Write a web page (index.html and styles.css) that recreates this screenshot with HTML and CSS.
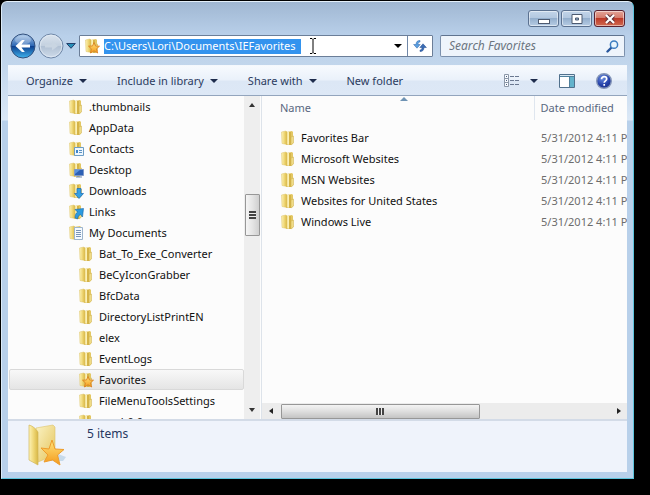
FILE: index.html
```html
<!DOCTYPE html>
<html lang="en">
<head>
<meta charset="utf-8">
<title>IEFavorites</title>
<link rel="stylesheet" href="styles.css">
</head>
<body>
<svg class="defs" aria-hidden="true">
  <defs>
    <linearGradient id="gold" x1="0" x2="1" y1="0" y2="0">
      <stop offset="0" stop-color="#fdf3b8"/><stop offset=".5" stop-color="#f0d878"/><stop offset="1" stop-color="#d9b845"/>
    </linearGradient>
    <linearGradient id="goldv" x1="0" x2="1" y1="0" y2="1">
      <stop offset="0" stop-color="#fbf3c4"/><stop offset="1" stop-color="#e4c45c"/>
    </linearGradient>
    <linearGradient id="star" x1="0" x2="0" y1="0" y2="1">
      <stop offset="0" stop-color="#ffe47a"/><stop offset="1" stop-color="#f49a1c"/>
    </linearGradient>
    <linearGradient id="back" x1="0" x2="0" y1="0" y2="1">
      <stop offset="0" stop-color="#a9c8ea"/><stop offset=".48" stop-color="#2f68b4"/><stop offset=".5" stop-color="#0c3c8c"/><stop offset="1" stop-color="#3fb4ee"/>
    </linearGradient>
    <linearGradient id="fwd" x1="0" x2="0" y1="0" y2="1">
      <stop offset="0" stop-color="#dbe4ee"/><stop offset=".48" stop-color="#c3d0df"/><stop offset=".52" stop-color="#b1c1d4"/><stop offset="1" stop-color="#cfdcea"/>
    </linearGradient>
    <radialGradient id="help" cx=".4" cy=".3" r=".8">
      <stop offset="0" stop-color="#6c8fe0"/><stop offset=".6" stop-color="#2440a8"/><stop offset="1" stop-color="#1c2f80"/>
    </radialGradient>
    <symbol id="folder" viewBox="0 0 16 16">
      <path d="M6 2 12 1l1 1v12l-7 1z" fill="#e3c763"/>
      <path d="M7 2h2v12H7z" fill="#fbf0b4"/>
      <path d="M9 2h2v13H9z" fill="#d5b447"/>
      <path d="M11 7 13.500 6v7L11 15z" fill="#f0dc86" stroke="#cdae4c" stroke-width=".5"/>
      <path d="M1.500 2 6 1l1 1v12.500L2 13.500z" fill="url(#gold)" stroke="#dcc266" stroke-width=".5"/>
    </symbol>
    <symbol id="contacts" viewBox="0 0 16 16">
      <use href="#folder"/><path d="M6.500 6.500h9v8h-9z" fill="#eef7fe" stroke="#6c9cc4"/><path d="M8 9h2v3H8z" fill="#3d86cc"/><path d="M11 9.500h3M11 11.500h3" stroke="#5d92c4"/>
    </symbol>
    <symbol id="desktop" viewBox="0 0 16 16">
      <use href="#folder"/><path d="M6.500 7.500h9v6h-9z" fill="#2c5fb4" stroke="#7d98c8"/><path d="m7 8h5l-5 4z" fill="#5b93dc"/><path d="M8 15h6" stroke="#718bb8"/>
    </symbol>
    <symbol id="downloads" viewBox="0 0 16 16">
      <use href="#folder"/><path d="M9 5.500h4v5h2.500L11 15.500 6.500 10.500H9z" fill="#35a0e4" stroke="#1769b4" stroke-width=".7"/>
    </symbol>
    <symbol id="links" viewBox="0 0 16 16">
      <use href="#folder"/><path d="M7 5.500l8.500-1-1 8.500-2-2.500c-2 1-2.500 2-3 4.500l-2.500-1c0-3 1-5 2.500-6z" fill="#2c9ae0" stroke="#1464a8" stroke-width=".6"/>
    </symbol>
    <symbol id="documents" viewBox="0 0 16 16">
      <use href="#folder"/><path d="M6.500 2.500h8v12h-8z" fill="#f5faff" stroke="#9db4cc"/><path d="M8 5.500h5M8 7.500h5M8 9.500h5M8 11.500h5" stroke="#7894b8"/>
    </symbol>
    <symbol id="favorites" viewBox="0 0 16 16">
      <use href="#folder"/><path d="m10 4.500 1.500 3.500 4 .2-3 2.600 1.200 4.200-3.700-2.200L6.500 15l.9-4.200-2.900-2.600 4-.2z" fill="url(#star)" stroke="#d87818" stroke-width=".8"/>
    </symbol>
  </defs>
</svg>

<main class="window">
  <header class="titlebar">
    <button class="caption" aria-label="Minimize"><svg width="12" height="12" viewBox="0 0 12 12"><rect x=".5" y="6.500" width="11" height="4" fill="#fff" stroke="#4d5a70"/></svg></button>
    <button class="caption" aria-label="Maximize"><svg width="12" height="12" viewBox="0 0 12 12"><path d="M1 1.500h10v9H1zM4.500 5h3v2h-3z" fill="#fff" fill-rule="evenodd" stroke="#4d5a70"/></svg></button>
    <button class="caption close" aria-label="Close"><svg width="12" height="12" viewBox="0 0 12 12"><path d="m2.500 2.500 7 7m0-7-7 7" stroke="#5c3038" stroke-width="4"/><path d="m2 2 8 8m0-8-8 8" stroke="#fff" stroke-width="2.200"/></svg></button>
  </header>

  <nav class="address-row" aria-label="Location">
    <div class="travel">
      <button class="plain" aria-label="Back"><svg width="26" height="26" viewBox="0 0 26 26"><circle cx="13" cy="13" r="12" fill="url(#back)" stroke="#33507c"/><ellipse cx="13" cy="7" rx="8" ry="4.500" fill="#fff" opacity=".25"/><path d="M5.500 13 12 7h2.800L11.500 11.500H20v3h-8.500l3.300 4.500H12z" fill="#fff"/></svg></button>
      <button class="plain" aria-label="Forward"><svg width="26" height="26" viewBox="0 0 26 26"><circle cx="13" cy="13" r="12" fill="url(#fwd)" stroke="#7088a8"/><circle cx="13" cy="13" r="10.800" fill="none" stroke="#e4edf7" opacity=".7"/><path d="M20 13 14 8.500v3H7v3h7v3z" fill="#c9d5e2"/></svg></button>
      <button class="plain recent" aria-label="Recent pages"><svg width="10" height="6" viewBox="0 0 10 6"><path d="M.7.500h8.600L5 5.300z" fill="#278fb8" stroke="#25406c"/></svg></button>
    </div>
    <div class="address">
      <svg class="ico" viewBox="0 0 16 16"><use href="#favorites"/></svg>
      <input class="path" id="path" aria-label="Address" value="C:\Users\Lori\Documents\IEFavorites">
      <svg class="ibeam" width="8" height="16" viewBox="0 0 8 16"><path d="M1 .5h2l1 1 1-1h2M4 1.500v13M1 15.500h2l1-1 1 1h2" fill="none" stroke="#000"/></svg>
      <button class="plain drop" aria-label="Previous locations"><i class="caret black"></i></button>
      <button class="plain refresh" aria-label="Refresh"><svg width="14" height="14" viewBox="0 0 14 14"><path d="M7 1.500C4.600 1.300 3 2.800 3 5.500H.6L4 9.200 7.200 5.500H5C5 4 5.600 3 7 3z" fill="#5a9fe0" stroke="#2f64a8" stroke-width=".5"/><path d="M7 12.500c2.400.2 4-1.300 4-4h2.400L10 4.800 6.800 8.500H9c0 1.500-.6 2.500-2 2.500z" fill="#3a6cb4" stroke="#234d90" stroke-width=".5"/></svg></button>
    </div>
    <div class="search">
      <input type="search" class="query" aria-label="Search Favorites" placeholder="Search Favorites">
      <svg width="13" height="13" viewBox="0 0 13 13"><path d="m1.500 11.500 4-4" stroke="#28569c" stroke-width="2.400" stroke-linecap="round"/><circle cx="8" cy="4.700" r="3.600" fill="#e8f5fd" stroke="#3b7cc0" stroke-width="1.500"/></svg>
    </div>
  </nav>

  <div class="client">
    <div class="toolbar">
      <button class="plain cmd">Organize<i class="caret"></i></button>
      <button class="plain cmd">Include in library<i class="caret"></i></button>
      <button class="plain cmd">Share with<i class="caret"></i></button>
      <button class="plain cmd">New folder</button>
      <div class="tools">
        <button class="plain views" aria-label="Change view"><svg width="16" height="13" viewBox="0 0 16 13"><path d="M.5.500h4v12h-4zM.5 4.500h4M.5 8.500h4" fill="#f8fbff" stroke="#8c98a8"/><path d="M2 2.500h1M2 6.500h1M2 10.500h1" stroke="#4b5f7c"/><path d="M6 2.500h4M11 2.500h4M6 6.500h4M11 6.500h4M6 10.500h4M11 10.500h4" stroke="#6a7890"/></svg><i class="caret"></i></button>
        <button class="plain" aria-label="Preview pane"><svg width="16" height="14" viewBox="0 0 16 14"><path d="M.5.500h15v13H.5z" fill="#fff" stroke="#50708c"/><path d="M1 1h14v2H1z" fill="#d8e8f4"/><path d="M10 3h5v10h-5z" fill="#63b3cc"/><path d="M10.500 3v10M1 2.500h14" stroke="#50809c"/></svg></button>
        <button class="plain" aria-label="Get help"><svg width="16" height="16" viewBox="0 0 16 16"><circle cx="8" cy="8" r="7.300" fill="url(#help)" stroke="#8495b8" stroke-width="1.400"/><path d="M5.500 6.200C5.500 2.800 10.700 3 10.700 6c0 1.900-2.500 1.900-2.500 3.800M8.200 11v1.800" fill="none" stroke="#fff" stroke-width="1.700"/></svg></button>
      </div>
    </div>

    <div class="panes">
      <div class="tree-pane">
        <ul class="tree">
          <li><svg class="ico" viewBox="0 0 16 16"><use href="#folder"/></svg>.thumbnails</li>
          <li><svg class="ico" viewBox="0 0 16 16"><use href="#folder"/></svg>AppData</li>
          <li><svg class="ico" viewBox="0 0 16 16"><use href="#contacts"/></svg>Contacts</li>
          <li><svg class="ico" viewBox="0 0 16 16"><use href="#desktop"/></svg>Desktop</li>
          <li><svg class="ico" viewBox="0 0 16 16"><use href="#downloads"/></svg>Downloads</li>
          <li><svg class="ico" viewBox="0 0 16 16"><use href="#links"/></svg>Links</li>
          <li><svg class="ico" viewBox="0 0 16 16"><use href="#documents"/></svg>My Documents</li>
          <li class="sub"><svg class="ico" viewBox="0 0 16 16"><use href="#folder"/></svg>Bat_To_Exe_Converter</li>
          <li class="sub"><svg class="ico" viewBox="0 0 16 16"><use href="#folder"/></svg>BeCyIconGrabber</li>
          <li class="sub"><svg class="ico" viewBox="0 0 16 16"><use href="#folder"/></svg>BfcData</li>
          <li class="sub"><svg class="ico" viewBox="0 0 16 16"><use href="#folder"/></svg>DirectoryListPrintEN</li>
          <li class="sub"><svg class="ico" viewBox="0 0 16 16"><use href="#folder"/></svg>elex</li>
          <li class="sub"><svg class="ico" viewBox="0 0 16 16"><use href="#folder"/></svg>EventLogs</li>
          <li class="sub current"><svg class="ico" viewBox="0 0 16 16"><use href="#favorites"/></svg>Favorites</li>
          <li class="sub"><svg class="ico" viewBox="0 0 16 16"><use href="#folder"/></svg>FileMenuToolsSettings</li>
          <li class="sub"><svg class="ico" viewBox="0 0 16 16"><use href="#folder"/></svg>mcab0.0</li>
        </ul>
      </div>
      <div class="vscroll">
        <i class="arrow up"></i>
        <span class="space-a"></span>
        <span class="thumb"><i class="grip"></i></span>
        <span class="space-b"></span>
        <i class="arrow down"></i>
      </div>
      <section class="files">
        <div class="list">
          <table>
            <thead><tr><th class="name">Name<svg class="sort" width="8" height="4" viewBox="0 0 8 4"><path d="M4 0 8 4H0z" fill="#6f93b4"/></svg></th><th class="date">Date modified</th></tr></thead>
            <tbody>
              <tr><td><span class="file"><svg class="ico" viewBox="0 0 16 16"><use href="#folder"/></svg>Favorites Bar</span></td><td class="date">5/31/2012 4:11 PM</td></tr>
              <tr><td><span class="file"><svg class="ico" viewBox="0 0 16 16"><use href="#folder"/></svg>Microsoft Websites</span></td><td class="date">5/31/2012 4:11 PM</td></tr>
              <tr><td><span class="file"><svg class="ico" viewBox="0 0 16 16"><use href="#folder"/></svg>MSN Websites</span></td><td class="date">5/31/2012 4:11 PM</td></tr>
              <tr><td><span class="file"><svg class="ico" viewBox="0 0 16 16"><use href="#folder"/></svg>Websites for United States</span></td><td class="date">5/31/2012 4:11 PM</td></tr>
              <tr><td><span class="file"><svg class="ico" viewBox="0 0 16 16"><use href="#folder"/></svg>Windows Live</span></td><td class="date">5/31/2012 4:11 PM</td></tr>
            </tbody>
          </table>
        </div>
        <div class="hscroll">
          <i class="arrow left"></i>
          <span class="thumb"><i class="grip"></i></span>
          <span class="space"></span>
          <i class="arrow right"></i>
        </div>
      </section>
    </div>

    <footer class="details">
      <svg width="40" height="44" viewBox="0 0 40 44">
        <path d="M16 37h20l3-4-8-3z" fill="#8db4d4" opacity=".4"/>
        <path d="M9 4 26 1l2 2v28L11 38z" fill="url(#goldv)" stroke="#dcc36a" stroke-width=".6"/>
        <path d="M2 1c4 1 7 4 9 7v33l-9-5z" fill="url(#gold)" stroke="#d2b85c" stroke-width=".7"/>
        <path d="m25 16 3 9 9 .5-6.500 5.500 2.500 10-7.500-5L17 38l4-7-7-7 8 1z" fill="url(#star)" stroke="#ee9c2c" stroke-linejoin="round"/>
      </svg>
      <span>5 items</span>
    </footer>
  </div>
</main>
</body>
</html>
```
FILE: styles.css
```css
* { box-sizing: border-box; }

body {
  margin: 0;
  min-height: 100vh;
  padding: 1px 16px 16px 1px;
  display: flex;
  background: #000;
  font: 11px/20px "Noto Sans", "Open Sans", sans-serif;
  color: #111;
}

.defs { position: absolute; width: 0; height: 0; }
svg { display: block; flex: none; }

.plain {
  display: flex;
  align-items: center;
  padding: 0;
  border: 0;
  background: none;
  font: inherit;
  color: inherit;
}

.window {
  flex: 1;
  min-width: 0;
  display: flex;
  flex-direction: column;
  padding: 0 6px 6px;
  border: 1px solid #5cc4dc;
  border-top-color: #e4f0fa;
  border-left-color: #dcebf8;
  border-radius: 6px 6px 0 0;
  background: linear-gradient(#a0b7d2 0, #b9d0ea 34px, #c2d6ec 64px, #dbe8f6 118px, #b8d0ea 119px, #b8d0ea 100%);
}

.titlebar {
  display: flex;
  justify-content: flex-end;
  gap: 2px;
  height: 33px;
  padding: 8px 2px 0 0;
}
.caption {
  display: grid;
  place-items: center;
  width: 31px;
  height: 17px;
  padding: 0;
  border: 1px solid #5b7190;
  border-radius: 3px;
  background: linear-gradient(#c3d5e9 0, #b3c8e0 45%, #94afcd 50%, #b6cce4 100%);
  box-shadow: inset 0 0 0 1px rgba(255, 255, 255, .5);
}
.close {
  border-color: #5a2230;
  background: linear-gradient(#e4a497 0, #d57c6c 45%, #bd3a28 50%, #d06a50 100%);
}

.address-row {
  display: flex;
  align-items: center;
  gap: 7px;
  height: 22px;
  margin-bottom: 8px;
  padding: 0 2px;
}
.travel { display: flex; align-items: center; gap: 2px; width: 62px; }
.address {
  flex: 2 1 354px;
  min-width: 0;
  display: flex;
  align-items: center;
  height: 22px;
  padding-left: 4px;
  border: 1px solid #6b7e98;
  border-radius: 1px;
  background: #fff;
}
.path {
  width: 197px;
  height: 15px;
  margin-left: 4px;
  padding: 0;
  border: 0;
  outline: 0;
  background: #3393ee;
  font: inherit;
  color: #fff;
}
.ibeam { margin-left: 8px; }
.drop { margin-left: auto; padding: 0 5px; }
.refresh {
  justify-content: center;
  width: 25px;
  height: 20px;
  border-left: 1px solid #7088a8;
}
.search {
  flex: 1 1 185px;
  min-width: 0;
  display: flex;
  align-items: center;
  height: 22px;
  padding: 0 5px 0 8px;
  border: 1px solid #7b90ac;
  border-top-color: #5f738f;
  border-radius: 2px;
  background: #eef4fb;
}
.query {
  flex: 1;
  min-width: 0;
  padding: 0;
  border: 0;
  background: none;
  font: inherit;
  font-size: 12px;
  font-style: italic;
}
.query::placeholder { color: #6b7480; opacity: 1; }

.client {
  flex: 1;
  min-height: 0;
  display: flex;
  flex-direction: column;
}
.toolbar {
  display: flex;
  align-items: center;
  gap: 30px;
  height: 31px;
  padding: 0 15px 0 18px;
  border-top: 1px solid #f4f8fd;
  border-bottom: 1px solid #93a5bd;
  background: linear-gradient(#f7fafe 0, #eaf1fa 48%, #dce7f5 52%, #dde8f6 100%);
  color: #2b3b5e;
}
.cmd { gap: 6px; white-space: nowrap; }
.tools { display: flex; align-items: center; gap: 21px; margin-left: auto; }
.views { gap: 10px; }
.caret {
  border: 4px solid transparent;
  border-top: 4px solid #1e2c4c;
  border-bottom: 0;
}
.black { border-top-color: #000; }

.panes {
  flex: 1;
  min-height: 0;
  display: flex;
  background: #fcfcfc;
}
.ico { width: 16px; height: 16px; flex: none; }
.tree-pane { flex: 0 0 236px; position: relative; overflow: hidden; }
.tree {
  position: absolute;
  inset: 0;
  margin: 0;
  padding: 0 0 0 1px;
  list-style: none;
}
.tree li {
  display: flex;
  align-items: center;
  gap: 5px;
  height: 21px;
  padding-left: 59px;
  white-space: nowrap;
}
.tree .sub { padding-left: 69px; }
.tree .current {
  padding-left: 68px;
  border: 1px solid #d9d9d9;
  border-radius: 2px;
  background: linear-gradient(#f8f8f8, #e5e5e5);
}

.vscroll {
  flex: 0 0 16px;
  display: flex;
  flex-direction: column;
  align-items: center;
  padding: 7px 0;
  background: #eee;
}
.space-a { flex: 87; }
.space-b { flex: 171; }
.thumb {
  display: grid;
  place-items: center;
  border: 1px solid #979797;
  border-radius: 1px;
}
.vscroll .thumb {
  width: 15px;
  height: 42px;
  background: linear-gradient(90deg, #f5f5f5, #e4e4e4 50%, #cfcfcf);
}
.grip { width: 7px; height: 8px; background: repeating-linear-gradient(#444 0 2px, #eee 2px 3px); }
.arrow { border: 3px solid transparent; }
.up { border-top: 0; border-bottom: 4px solid #333; }
.down { border-bottom: 0; border-top: 4px solid #333; }
.left { border-left: 0; border-right: 4px solid #222; }
.right { border-right: 0; border-left: 4px solid #222; }

.files {
  flex: 1;
  min-width: 0;
  display: flex;
  flex-direction: column;
  margin-left: 1px;
  border-left: 1px solid #dde3ea;
}
.list { flex: 1; min-height: 0; overflow: hidden; }
table { width: 100%; table-layout: fixed; border-collapse: collapse; }
th {
  height: 24px;
  padding: 0 0 0 18px;
  border: 0;
  text-align: left;
  font-weight: 400;
  color: #5a6880;
}
thead::after { content: ""; display: block; height: 7px; }
.name { position: relative; }
.sort { position: absolute; top: 1px; left: 51%; }
.date { width: 93px; padding: 0 0 0 6px; white-space: nowrap; }
th.date { border-left: 1px solid #dfe6ef; }
td { height: 21px; padding: 0 0 0 18px; }
td.date { padding-left: 7px; color: #6d6d6d; overflow: hidden; }
.file { display: flex; align-items: center; gap: 5px; white-space: nowrap; }

.hscroll {
  display: flex;
  align-items: center;
  height: 16px;
  padding: 0 6px 0 7px;
  background: #ececec;
}
.hscroll .thumb {
  flex: 198;
  height: 15px;
  margin-left: 8px;
  background: linear-gradient(#f4f4f4, #dedede 50%, #c4c4c4);
}
.hscroll .grip { width: 8px; height: 7px; background: repeating-linear-gradient(90deg, #444 0 2px, #eee 2px 3px); }
.hscroll .space { flex: 138; }

.details {
  display: flex;
  gap: 20px;
  height: 53px;
  padding: 3px 19px;
  border-top: 2px solid #d3dbe7;
  background: #eff3fb;
  font-size: 12px;
  color: #26375f;
}
```
